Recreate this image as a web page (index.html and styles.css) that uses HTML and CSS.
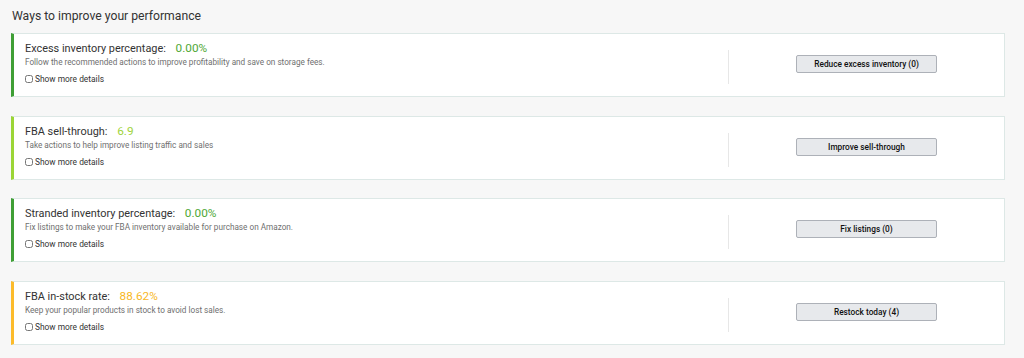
FILE: index.html
```html
<!DOCTYPE html>
<html lang="en">
<head>
  <meta charset="UTF-8" />
  <title>Ways to improve your performance</title>
  <link rel="stylesheet" href="styles.css">
</head>
<body>
  <div class="page">
    <h2 class="page-title">Ways to improve your performance</h2>
    <div class="card-list">
      <div class="card card-green">
        <div class="card-main">
          <div class="card-title">Excess inventory percentage: <span class="metric metric-green">0.00%</span></div>
          <div class="card-desc">Follow the recommended actions to improve profitability and save on storage fees.</div>
          <label class="details"><input type="checkbox" /> Show more details</label>
        </div>
        <div class="card-action">
          <button type="button" class="action-btn">Reduce excess inventory (0)</button>
        </div>
      </div>
      <div class="card card-lime">
        <div class="card-main">
          <div class="card-title">FBA sell-through: <span class="metric metric-lime">6.9</span></div>
          <div class="card-desc">Take actions to help improve listing traffic and sales</div>
          <label class="details"><input type="checkbox" /> Show more details</label>
        </div>
        <div class="card-action">
          <button type="button" class="action-btn">Improve sell-through</button>
        </div>
      </div>
      <div class="card card-green">
        <div class="card-main">
          <div class="card-title">Stranded inventory percentage: <span class="metric metric-green">0.00%</span></div>
          <div class="card-desc">Fix listings to make your FBA inventory available for purchase on Amazon.</div>
          <label class="details"><input type="checkbox" /> Show more details</label>
        </div>
        <div class="card-action">
          <button type="button" class="action-btn">Fix listings (0)</button>
        </div>
      </div>
      <div class="card card-yellow">
        <div class="card-main">
          <div class="card-title">FBA in-stock rate: <span class="metric metric-yellow">88.62%</span></div>
          <div class="card-desc">Keep your popular products in stock to avoid lost sales.</div>
          <label class="details"><input type="checkbox" /> Show more details</label>
        </div>
        <div class="card-action">
          <button type="button" class="action-btn">Restock today (4)</button>
        </div>
      </div>
    </div>
  </div>
</body>
</html>
```

FILE: styles.css
```css
body, html {
  margin: 0;
  padding: 0;
  background: #f7f7f7;
  font-family: Roboto, "Liberation Sans", Arial, sans-serif;
  color: #333;
}
.page {
  padding: 7px 0 0 11px;
  width: 994px;
}
.page-title {
  margin: 0 0 0 1px;
  font-size: 12.2px;
  font-weight: 400;
  line-height: 18px;
  color: #333;
}
.card-list {
  display: flex;
  flex-direction: column;
  gap: 18.7px;
  margin-top: 8px;
}
.card {
  display: flex;
  height: 64px;
  box-sizing: border-box;
  background: #fff;
  border: 1px solid #dde8e6;
  border-left: 3px solid #3f9f35;
}
.card-lime { border-left-color: #9bd536; }
.card-yellow { border-left-color: #fcbb2b; }
.card-main {
  flex: 1;
  padding: 7px 11px 6px;
}
.card-title {
  font-size: 10.9px;
  line-height: 14px;
}
.metric { margin-left: 7px; font-size: 11.8px; }
.metric-green { color: #4fa836; }
.metric-lime { color: #a0d43c; }
.metric-yellow { color: #f8b825; }
.card-desc {
  font-size: 8.2px;
  line-height: 12px;
  color: #6f6f6f;
  margin-top: 0;
}
.details {
  display: flex;
  align-items: center;
  gap: 2px;
  margin-top: 6px;
  font-size: 8.4px;
  color: #333;
}
.details input {
  width: 8px;
  height: 8px;
  margin: 0;
}
.card-action {
  width: 275px;
  display: flex;
  align-items: center;
  justify-content: center;
  border-left: 1px solid #e7e7e7;
  margin: 16px 0 12px;
}
.action-btn {
  width: 141px;
  height: 18px;
  margin-top: -6px;
  background: #e7e9ec;
  border: 1px solid #adb1b8;
  border-radius: 2px;
  font-family: inherit;
  font-size: 8.3px;
  font-weight: 500;
  color: #111;
  padding: 0;
}
```
